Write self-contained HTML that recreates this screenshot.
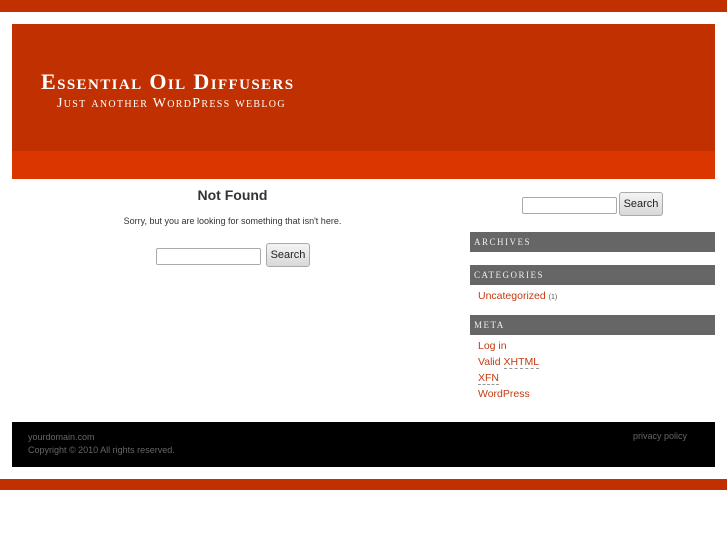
<!DOCTYPE html>
<html><head><style>
body{margin:0;background:#fff;width:727px;height:545px;position:relative;font-family:"Liberation Sans",sans-serif;overflow:hidden}
.a{position:absolute}
.sc{font-family:"Liberation Serif",serif;font-variant:small-caps;color:#fff}
input.t{position:absolute;border:1px solid #aaa;border-radius:2px;height:15px;padding:0;background:#fff}
.btn{position:absolute;border:1px solid #aaa;border-radius:3px;background:linear-gradient(#f4f4f4,#d8d8d8);font-size:11px;color:#222;text-align:center;box-sizing:border-box}
.h{position:absolute;left:470px;width:245px;height:20px;background:#666;color:#eee;font-family:"Liberation Serif",serif;font-size:9px;letter-spacing:1.5px;line-height:20px;text-indent:4px}
.l{position:absolute;left:478px;font-size:10.5px;color:#c33a12}
</style></head><body>
<div class="a" style="left:0;top:0;width:727px;height:12px;background:#c03000"></div>
<div class="a" style="left:12px;top:24px;width:703px;height:127px;background:#c03000"></div>
<div class="a" style="left:12px;top:151px;width:703px;height:28px;background:#db3500"></div>
<div class="a sc" style="left:41px;top:69px;font-size:22px;font-weight:bold;letter-spacing:1.4px">Essential Oil Diffusers</div>
<div class="a sc" style="left:57px;top:96px;font-size:14px;letter-spacing:1.3px">Just another WordPress weblog</div>

<div class="a" style="left:0;width:465px;top:187px;text-align:center;font-size:14px;font-weight:bold;color:#333">Not Found</div>
<div class="a" style="left:0;width:465px;top:216px;text-align:center;font-size:9px;color:#333">Sorry, but you are looking for something that isn't here.</div>
<input class="t" style="left:156px;top:248px;width:103px">
<div class="btn" style="left:266px;top:243px;width:44px;height:24px;line-height:22px">Search</div>

<input class="t" style="left:522px;top:197px;width:93px">
<div class="btn" style="left:619px;top:192px;width:44px;height:24px;line-height:22px">Search</div>
<div class="h" style="top:232px">ARCHIVES</div>
<div class="h" style="top:265px">CATEGORIES</div>
<div class="l" style="top:290px">Uncategorized <span style="font-size:7px;color:#555">(1)</span></div>
<div class="h" style="top:315px">META</div>
<div class="l" style="top:340px">Log in</div>
<div class="l" style="top:356px">Valid <span style="border-bottom:1px dashed #999">XHTML</span></div>
<div class="l" style="top:372px"><span style="border-bottom:1px dashed #999">XFN</span></div>
<div class="l" style="top:388px">WordPress</div>

<div class="a" style="left:12px;top:422px;width:703px;height:45px;background:#000"></div>
<div class="a" style="left:28px;top:431px;font-size:9px;color:#666;line-height:13px">yourdomain.com<br>Copyright © 2010 All rights reserved.</div>
<div class="a" style="left:633px;top:431px;font-size:9px;color:#666">privacy policy</div>
<div class="a" style="left:0;top:479px;width:727px;height:11px;background:#c03000"></div>
</body></html>
